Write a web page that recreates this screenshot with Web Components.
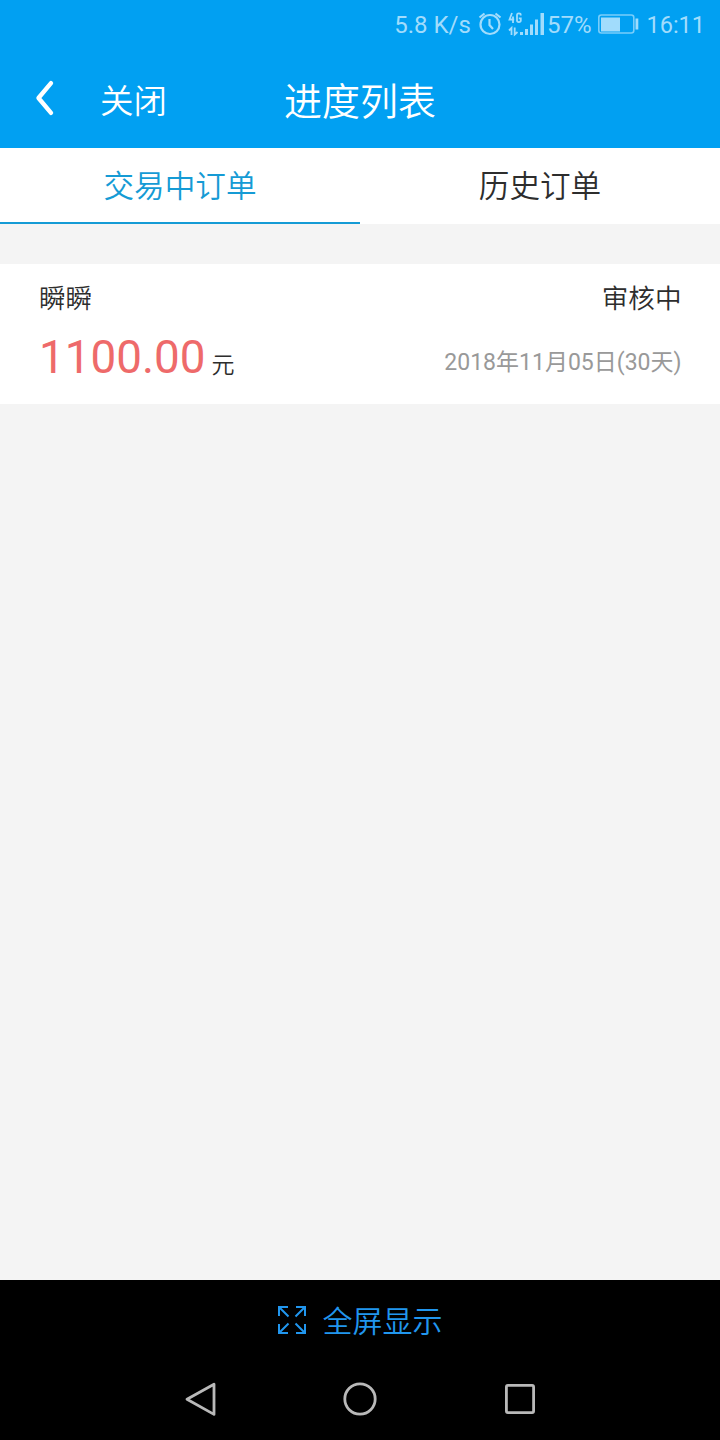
<!DOCTYPE html>
<html lang="zh-CN">
<head>
<meta charset="UTF-8">
<meta name="viewport" content="width=device-width, initial-scale=1.0">
<title>进度列表</title>
<style>
body {
  margin: 0;
  background: #f4f4f4;
  color: #2d2d2d;
  font-family: Roboto, "Noto Sans CJK SC", sans-serif;
}
</style>
</head>
<body>
<progress-app></progress-app>

<script>
const createTemplate = (html) => {
  const template = document.createElement('template');
  template.innerHTML = html;
  return template;
};

class BaseElement extends HTMLElement {
  constructor() {
    super();
    this.shadow = this.attachShadow({ mode: 'open' });
    this.shadow.appendChild(this.constructor.template.content.cloneNode(true));
  }
}

class StatusBar extends BaseElement {
  static template = createTemplate(/* html */ `
<style>
:host {
  display: flex;
  align-items: center;
  justify-content: flex-end;
  box-sizing: border-box;
  height: 48px;
  padding-right: 15px;
  color: #a1dcfc;
  font-size: 24px;
  line-height: 28px;
  white-space: nowrap;
}
span { padding-top: 1px; }
.time { font-size: 23.500px; }
svg { display: block; flex: none; }
.alarm { margin: 0 6px 0 7px; }
.signal { margin-right: 3px; }
.battery { margin: 0 7px 0 6px; }
</style>
<span>5.8 K/s</span>
<svg class="alarm" width="24" height="26" viewBox="0 0 24 26" fill="none" stroke="currentColor" stroke-width="2.200">
  <circle cx="12" cy="13.500" r="9.500"/>
  <path d="M11.500 8v6l3.500 4M1.500 6.500l5-4M22.500 6.500l-5-4"/>
</svg>
<svg class="signal" width="36" height="26" viewBox="0 0 36 26">
  <g fill="none" stroke="currentColor" stroke-width="1.800">
    <path d="M4 2L1.500 8.500h4.700M5 5.500V12M12.700 4.500V3.800Q12.700 2.400 10.900 2.400T9 3.800v5.800q0 1.500 1.900 1.500t1.900-1.500V7.300h-2"/>
    <path d="M1 19.500l2.500-2.500v7M6.700 16.500v7l2.800-2.500"/>
  </g>
  <path fill="currentColor" d="M12 21h3v3h-3zM17 18h3v6h-3zM22 13.500h3V24h-3zM27 8.500h3V24h-3zM32.500 2H36v22h-3.500z"/>
</svg>
<span>57%</span>
<svg class="battery" width="42" height="22" viewBox="0 0 42 22">
  <rect x="1.800" y="2" width="35" height="18" rx="2.500" fill="none" stroke="currentColor" stroke-width="1.600" opacity=".75"/>
  <path fill="currentColor" d="M4 4.500h19v14H4zM38.500 5.500h2.800v11h-2.800z"/>
</svg>
<span class="time">16:11</span>
`);
}

class NavBar extends BaseElement {
  static template = createTemplate(/* html */ `
<style>
:host {
  display: grid;
  grid-template-columns: 1fr auto 1fr;
  align-items: center;
  height: 100px;
  color: #fff;
  font-weight: 350;
}
.left {
  display: flex;
  align-items: center;
  gap: 45px;
  padding-left: 34px;
  font-size: 33.500px;
}
.left svg { display: block; }
.title { font-size: 38px; }
</style>
<div class="left">
  <svg width="21" height="36" viewBox="0 0 21 36" fill="none" stroke="currentColor" stroke-width="4.400" stroke-linecap="round" stroke-linejoin="round">
    <path d="M17 3.200L4.500 18 17 32.800"/>
  </svg>
  <span><slot name="close"></slot></span>
</div>
<div class="title"><slot></slot></div>
`);
}

class OrderTab extends BaseElement {
  static template = createTemplate(/* html */ `
<style>
:host {
  flex: 1;
  display: block;
  box-sizing: border-box;
  height: 76px;
  border-bottom: 2px solid transparent;
  background: #fff;
  font-size: 30.600px;
  font-weight: 350;
  line-height: 77px;
  text-align: center;
}
:host([active]) {
  color: #159bd5;
  border-bottom-color: #159bd5;
}
</style>
<slot></slot>
`);
}

class OrderCard extends BaseElement {
  static template = createTemplate(/* html */ `
<style>
:host {
  display: block;
  box-sizing: border-box;
  height: 140px;
  padding: 15px 38.500px 0 39px;
  background: #fff;
  font-size: 26.600px;
}
.row {
  display: flex;
  justify-content: space-between;
  line-height: 40px;
}
.top { font-weight: 350; }
.bottom {
  align-items: center;
  height: 60px;
  margin-top: 13px;
  line-height: 60px;
}
.amount { color: #ee6a6a; font-size: 45.800px; }
.unit { font-size: 23px; font-weight: 350; margin-left: 6px; }
.date { color: #999; font-size: 23px; padding-top: 2px; }
</style>
<div class="row top">
  <slot name="name"></slot>
  <slot name="status"></slot>
</div>
<div class="row bottom">
  <div><span class="amount"><slot name="amount"></slot></span><span class="unit">元</span></div>
  <div class="date"><slot name="date"></slot></div>
</div>
`);
}

class FullscreenBar extends BaseElement {
  static template = createTemplate(/* html */ `
<style>
:host {
  display: flex;
  align-items: center;
  justify-content: center;
  gap: 16px;
  height: 80px;
  background: #000;
  color: #2196ee;
  font-size: 30px;
  font-weight: 350;
}
svg { display: block; }
span { margin: -2px 1px 0 0; }
</style>
<svg width="30" height="30" viewBox="0 0 30 30" fill="none" stroke="currentColor" stroke-width="2">
  <path d="M2 11V2h9M2 2l9.500 9.500M19 2h9v9M28 2l-9.500 9.500M2 19v9h9M2 28l9.500-9.500M28 19v9h-9M28 28l-9.500-9.500"/>
</svg>
<span><slot></slot></span>
`);
}

class SystemNav extends BaseElement {
  static template = createTemplate(/* html */ `
<style>
:host {
  display: flex;
  justify-content: center;
  gap: 124px;
  height: 80px;
  background: #000;
  color: #b9b9b9;
}
svg { display: block; margin-top: 21px; }
</style>
<svg width="36" height="36" viewBox="0 0 36 36" fill="none" stroke="currentColor" stroke-width="2.800" stroke-linejoin="round">
  <path d="M32 3.200v30.200L5 18.200z"/>
</svg>
<svg width="36" height="36" viewBox="0 0 36 36" fill="none" stroke="currentColor" stroke-width="2.800">
  <circle cx="18" cy="18" r="15.200"/>
</svg>
<svg width="36" height="36" viewBox="0 0 36 36" fill="none" stroke="currentColor" stroke-width="2.800">
  <rect x="4.400" y="4.400" width="27.200" height="27.200" rx="1.500"/>
</svg>
`);
}

class ProgressApp extends BaseElement {
  static template = createTemplate(/* html */ `
<style>
:host {
  display: flex;
  flex-direction: column;
  height: 1440px;
  overflow: hidden;
}
header { background: #01a0f2; }
nav { display: flex; }
main { flex: 1; padding-top: 40px; }
</style>
<header>
  <status-bar></status-bar>
  <nav-bar><span slot="close">关闭</span>进度列表</nav-bar>
</header>
<nav>
  <order-tab active>交易中订单</order-tab>
  <order-tab>历史订单</order-tab>
</nav>
<main>
  <order-card>
    <span slot="name">瞬瞬</span>
    <span slot="status">审核中</span>
    <span slot="amount">1100.00</span>
    <span slot="date">2018年11月05日(30天)</span>
  </order-card>
</main>
<fullscreen-bar>全屏显示</fullscreen-bar>
<system-nav></system-nav>
`);
}

customElements.define('status-bar', StatusBar);
customElements.define('nav-bar', NavBar);
customElements.define('order-tab', OrderTab);
customElements.define('order-card', OrderCard);
customElements.define('fullscreen-bar', FullscreenBar);
customElements.define('system-nav', SystemNav);
customElements.define('progress-app', ProgressApp);
</script>
</body>
</html>
